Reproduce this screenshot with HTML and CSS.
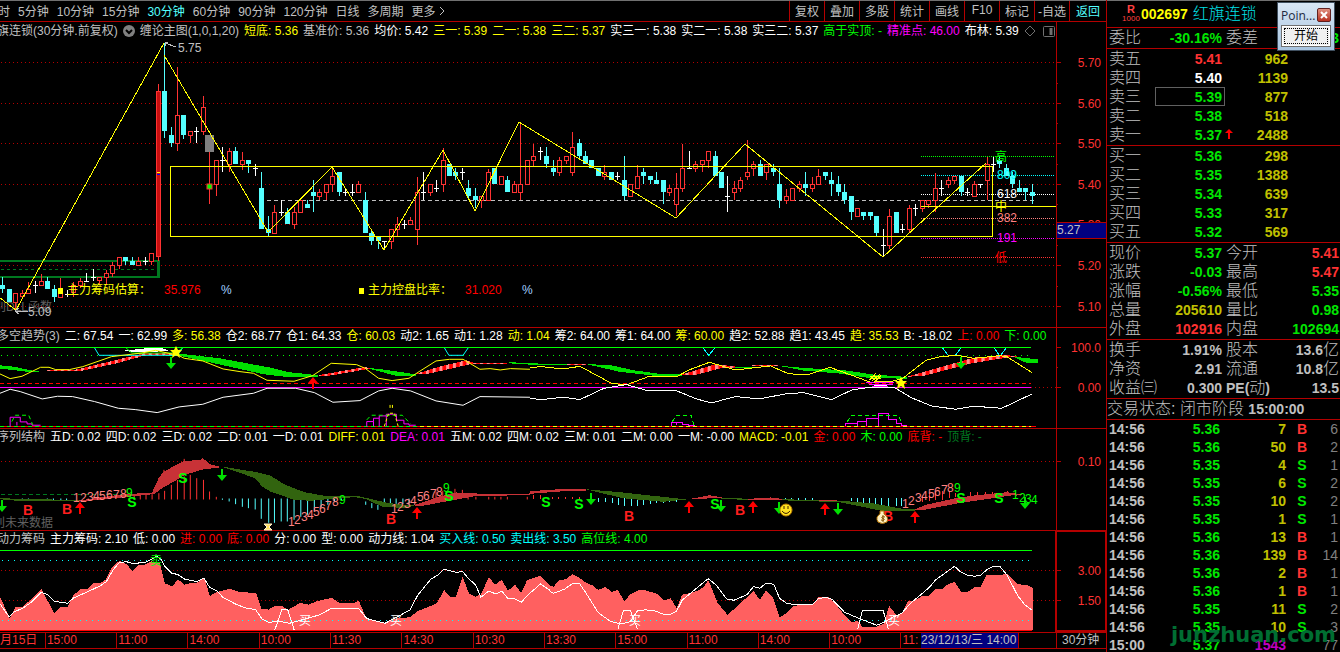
FILE: index.html
```html
<!DOCTYPE html>
<html lang="zh-CN">
<head>
    <meta charset="UTF-8">
    <meta name="viewport" content="width=device-width, initial-scale=1.0">
    <title>红旗连锁 002697</title>
    <link rel="stylesheet" href="styles.css">
</head>
<body>
    <div class="app">
        <main class="charts">
            <nav class="topbar">
                <div class="periods">
                    <button>时</button>
                    <button>5分钟</button>
                    <button>10分钟</button>
                    <button>15分钟</button>
                    <button class="active">30分钟</button>
                    <button>60分钟</button>
                    <button>90分钟</button>
                    <button>120分钟</button>
                    <button>日线</button>
                    <button>多周期</button>
                    <button>更多
                        <svg width="6" height="10" viewBox="0 0 6 10"><path d="M1 1l4 4-4 4" fill="none" stroke="#c0c0c0"/></svg>
                    </button>
                </div>
                <div class="tools">
                    <button>复权</button>
                    <button>叠加</button>
                    <button>多股</button>
                    <button>统计</button>
                    <button>画线</button>
                    <button>F10</button>
                    <button>标记</button>
                    <button>-自选</button>
                    <button class="back">返回</button>
                </div>
            </nav>

            <section class="panel">
                <header class="legend">
                    <span class="title">旗连锁(30分钟.前复权)</span>
                    <svg width="12" height="12" viewBox="0 0 12 12"><circle cx="6" cy="6" r="6" fill="#808080"/><path d="M3 5l3 3 3-3" fill="none" stroke="#000" stroke-width="2"/></svg>
                    <span class="gray">缠论主图(1,0,1,20)</span>
                    <span class="yellow">短底: 5.36</span>
                    <span class="gray">基准价: 5.36</span>
                    <span>均价: 5.42</span>
                    <span class="yellow">三一: 5.39</span>
                    <span class="yellow">二一: 5.38</span>
                    <span class="yellow">三二: 5.37</span>
                    <span>实三一: 5.38</span>
                    <span>实二一: 5.38</span>
                    <span>实三二: 5.37</span>
                    <span class="green">高于实顶: -</span>
                    <span class="magenta">精准点: 46.00</span>
                    <span>布林: 5.39</span>
                    <svg width="32" height="12" viewBox="0 0 32 12" fill="none" stroke="#707070"><path d="M6 1l5 5-5 5-5-5z"/><rect x="19.500" y="1.500" width="11" height="10" rx="1"/><path d="M27 3v7" stroke-width="3"/></svg>
                </header>
                <svg class="plot" viewBox="0 42 1106 285">
                    <g class="grid">
                        <path d="M1 62.500H1056M1 103.500H1056M1 143.500H1056M1 184.500H1056M1 224.500H1056M1 265.500H1056M1 306.500H1056"/>
                    </g>
                    <path class="axis" d="M1056.500 42V327M1056 62.500h5M1056 103.500h5M1056 143.500h5M1056 184.500h5M1056 224.500h5M1056 265.500h5M1056 306.500h5M1056 83.500h2M1056 123.500h2M1056 164.500h2M1056 204.500h2M1056 245.500h2M1056 286.500h2"/>
                    <g class="scale">
                        <text x="1101" y="67">5.70</text>
                        <text x="1101" y="108">5.60</text>
                        <text x="1101" y="148">5.50</text>
                        <text x="1101" y="189">5.40</text>
                        <text x="1101" y="229">5.30</text>
                        <text x="1101" y="270">5.20</text>
                        <text x="1101" y="311">5.10</text>
                    </g>

                    <!-- golden section levels -->
                    <g class="levels">
                        <path stroke="#00ff00" d="M921 156.500H1055"/>
                        <path stroke="#00ffff" d="M921 175.500H1055"/>
                        <path stroke="#ffffff" d="M921 194.500H1055"/>
                        <path stroke="#ff8080" d="M921 218.500H1055"/>
                        <path stroke="#ff00ff" d="M921 238.500H1055"/>
                        <path stroke="#ff3232" d="M921 257.500H1055"/>
                    </g>
                    <path d="M0 261H158.500V277H0" fill="none" stroke="#007820" stroke-width="2"/>
                    <path d="M158.500 261V278" stroke="#007820" stroke-width="3"/>
                    <path d="M1 269.500H154" stroke="#007820" stroke-dasharray="3 3"/>
                    <path d="M267 200.500H1036" stroke="#c0c0c0" stroke-dasharray="4 3"/>

                    <text x="-6" y="311" fill="#606060">别DLL函数</text>
                    <g id="candles" shape-rendering="crispEdges"></g>
                    <rect x="205" y="135" width="9" height="17" fill="#808080"/>
                    <rect x="207" y="184" width="5" height="5" fill="#00ff00" stroke="#ff3232"/>
                    <path d="M157 172.500h3" stroke="#ffff00"/>
                    <path d="M157 174.500h3" stroke="#0000ff"/>

                    <g class="line yellow-line">
                        <path d="M0 298L16 310L164 43M164 55L268 232L332 167L384 250L443 150L475 211L519 122L676 218L745 144L883 257L986 163"/>
                        <rect x="170.500" y="166.500" width="822" height="70"/>
                        <path d="M921 206.500H1056"/>
                    </g>
                    <path d="M176 47l-11-4M165 46v-4h3M28 311.500H16M19 308l-4 3 4 3" fill="none" stroke="#c0c0c0"/>
                    <text x="178" y="52" fill="#c0c0c0">5.75</text>
                    <text x="28" y="316" fill="#c0c0c0">5.09</text>

                    <text x="995" y="161" fill="#00ff00">高</text>
                    <text x="997" y="179" fill="#00ffff">809</text>
                    <text x="997" y="198" fill="#ffffff">618</text>
                    <text x="995" y="211" fill="#ffff00">中</text>
                    <text x="997" y="222" fill="#ff8080">382</text>
                    <text x="997" y="242" fill="#ff00ff">191</text>
                    <text x="995" y="262" fill="#ff0000">低</text>

                    <rect x="58" y="288" width="5" height="6" fill="#ffff00"/>
                    <text x="67" y="294" fill="#ffff00">主力筹码估算：</text>
                    <text x="164" y="294" fill="#ff0000">35.976</text>
                    <text x="221" y="294" fill="#a0d0ff">%</text>
                    <rect x="359" y="288" width="5" height="6" fill="#ffff00"/>
                    <text x="368" y="294" fill="#ffff00">主力控盘比率：</text>
                    <text x="465" y="294" fill="#ff0000">31.020</text>
                    <text x="522" y="294" fill="#a0d0ff">%</text>

                    <rect x="1056.500" y="222.500" width="50" height="16" fill="#000080" stroke="#b40000"/>
                    <text x="1057" y="234" fill="#c0c0c0">5.27</text>
                </svg>
            </section>

            <section class="panel">
                <header class="legend">
                    <span class="title">多空趋势(3)</span>
                    <span>二: 67.54</span>
                    <span>一: 62.99</span>
                    <span class="yellow">多: 56.38</span>
                    <span>仓2: 68.77</span>
                    <span>仓1: 64.33</span>
                    <span class="yellow">仓: 60.03</span>
                    <span>动2: 1.65</span>
                    <span>动1: 1.28</span>
                    <span class="yellow">动: 1.04</span>
                    <span>筹2: 64.00</span>
                    <span>筹1: 64.00</span>
                    <span class="yellow">筹: 60.00</span>
                    <span>趋2: 52.88</span>
                    <span>趋1: 43.45</span>
                    <span class="yellow">趋: 35.53</span>
                    <span>B: -18.02</span>
                    <span class="red">上: 0.00</span>
                    <span class="green">下: 0.00</span>
                </header>
                <svg class="plot" viewBox="0 347 1106 81">
                    <defs>
                        <pattern id="stripes" width="20" height="10" patternUnits="userSpaceOnUse">
                            <rect width="20" height="10" fill="#ff0000"/>
                            <rect width="9" height="10" fill="#ff9090"/>
                        </pattern>
                        <path id="down" d="M-1-6h2v6h4l-5 6-5-6h4z" fill="#00e000"/>
                        <path id="up" d="M-1 6h2v-6h4l-5-6-5 6h4z" fill="#ff0000"/>
                        <path id="star" d="M0-6l2 4 4 0-3 3 1 5-4-3-4 3 1-5-3-3 4 0z" fill="#ffff00"/>
                    </defs>
                    <path d="M0 347.500H1031" stroke="#00ff00"/>
                    <path d="M1 355.500H1031" stroke="#00ff00" stroke-dasharray="1 5"/>
                    <path d="M0 383.500H1031" stroke="#ff0000" stroke-dasharray="4 3"/>
                    <path d="M0 387.500H1031" stroke="#ff00ff"/>
                    <path class="grid" d="M1031 387.500H1056"/>
                    <path d="M0 426.500H1036" stroke="#ff0000"/>
                    <path d="M0 426.500H420" stroke="#00ff00" stroke-dasharray="4 3"/>
                    <path d="M420 426.500H1031" stroke="#ffff00" stroke-dasharray="4 3"/>
                    <path class="axis" d="M1056.500 347V428M1056 347.500h5M1056 387.500h5M1056 367.500h2"/>
                    <g class="scale">
                        <text x="1101" y="352">100.0</text>
                        <text x="1101" y="392">0.00</text>
                    </g>

                    <g class="line" transform="translate(0 325) scale(.338 .333)">
                        <g class="fill" fill="#00e000">
                            <path d="M0 121L40 125L95 137H140L95 142L0 131Z"/>
                            <path d="M400 84L540 87L650 100L800 128L850 141L940 151V156L850 156L780 148L620 112L540 94L400 87Z"/>
                            <path d="M1080 128L1130 133L1230 148V153L1170 152Z"/>
                            <path d="M1505 112L1568 114V119L1505 115Z"/>
                        </g>
                        <g class="fill" fill="url(#stripes)">
                            <path d="M140 134H225L430 84H520V91H430L350 114L240 138H140Z"/>
                            <path d="M940 151L1080 126L1095 131L1000 148L960 154Z"/>
                            <path d="M1230 147L1300 125L1380 106L1400 113H1500V116H1400L1260 148Z"/>
                        </g>
                        <path class="fill" fill="#ffffff" d="M358 78L440 69H480L500 78L420 82Z"/>
                        <path stroke="#00ffff" d="M280 69L293 91H525L540 69M1315 69L1328 91H1370L1385 69"/>
                        <path stroke="#00ff00" d="M373 69L390 84H520L540 69"/>
                        <path stroke="#ffff00" d="M0 147L30 161L65 154L120 127H145L165 134H205L245 125L330 95L420 84L460 76L530 92L545 100L600 108L660 132L710 140L750 145L790 166L870 169L925 152L980 115L1055 119L1080 130L1120 160L1160 167L1210 160L1240 140L1290 108L1330 103H1370L1420 133L1450 131L1480 135L1510 131L1568 133"/>
                        <path stroke="#ffffff" d="M0 205L30 193L60 200L125 222L170 214L215 215L280 230L350 250L400 254L465 263L530 246L600 238L660 217L750 205L790 190H875L930 203L985 232L1065 227L1120 198L1160 190L1215 198L1290 228L1370 241L1420 215L1568 217"/>
                        <path stroke="#ff00ff" d="M30 305V277H60V291H80V297H95V301H120M50 291V302M1085 305V290H1105V280H1122V273H1143V268H1173V286H1195V297H1210V301H1230M1105 290V304M1122 280V304M1143 273V304"/>
                        <path stroke="#00ff00" stroke-dasharray="4 3" d="M35 290L45 271H85L97 300M1085 285L1098 271H1190L1215 297"/>
                        <path stroke="#ffff00" stroke-dasharray="3 2" d="M1137 304L1150 265H1167L1178 304M1154 240V255M1161 240V255"/>
                    </g>
                    <g class="line" transform="translate(530 325) scale(.37 .333)">
                        <g class="fill" fill="#00e000">
                            <path d="M0 115L100 118V121L0 119Z"/>
                            <path d="M150 117L220 121L280 136L360 148H410V153H340L240 140Z"/>
                            <path d="M555 126H600V129H555ZM670 122L740 129L850 136L930 149L1020 156V161L920 160L840 146L740 137Z"/>
                            <path d="M1305 95L1372 103V113H1340Z"/>
                        </g>
                        <g class="fill" fill="url(#stripes)">
                            <path d="M100 117H150V120H100Z"/>
                            <path d="M410 149L500 118L555 124V128L520 129L450 149Z"/>
                            <path d="M600 120H670V123H600Z"/>
                            <path d="M1020 155L1200 98L1280 90L1320 94L1260 103L1190 116L1060 154Z"/>
                        </g>
                        <path stroke="#00ffff" d="M468 69L483 92L499 69M1115 69L1130 91H1150L1165 69M1255 69L1270 94L1287 69"/>
                        <path stroke="#ffff00" d="M0 128L30 125L90 132L135 124L170 145L220 175L260 180L320 155L395 156L430 135L485 112L555 135L650 123L700 147L755 148L810 127L860 147L920 172L985 168L1010 158L1070 106L1110 95L1155 91L1200 100L1270 92L1290 96L1357 143"/>
                        <path stroke="#ffffff" d="M0 220L30 224L90 217L135 224L200 190L260 179L320 198L395 197L450 222L490 234L555 215L620 222L690 207L740 203L815 224L870 195L920 187L985 188L1030 218L1085 243L1150 253L1200 244L1275 250L1357 207"/>
                        <path stroke="#ff00ff" d="M382 303V292H412V298H428V301H445M397 292V300M853 303V295H885V290H910V282H942V265H970V285H990V295H1005V301H1020M885 295V304M910 290V304M942 282V304"/>
                        <path stroke="#00ff00" stroke-dasharray="4 3" d="M385 290L395 271H435L443 300M857 290L870 271H995L1003 290"/>
                        <path stroke="#ff00ff" d="M908 173H985M915 178H980M925 184H968"/>
                        <path stroke="#ffffff" d="M930 181H965"/>
                        <path stroke="#ffff00" d="M918 165L935 145M925 168L945 148M930 172L948 152M920 155H945M918 162H948"/>
                    </g>
                    <use href="#star" x="176" y="352"/>
                    <use href="#star" x="901" y="383"/>
                    <use href="#down" x="171" y="363"/>
                    <use href="#down" x="961" y="363"/>
                    <use href="#up" x="313" y="383"/>
                </svg>
            </section>

            <section class="panel">
                <header class="legend">
                    <span class="title">序列结构</span>
                    <span>五D: 0.02</span>
                    <span>四D: 0.02</span>
                    <span>三D: 0.02</span>
                    <span>二D: 0.01</span>
                    <span>一D: 0.01</span>
                    <span class="yellow">DIFF: 0.01</span>
                    <span class="magenta">DEA: 0.01</span>
                    <span>五M: 0.02</span>
                    <span>四M: 0.02</span>
                    <span>三M: 0.01</span>
                    <span>二M: 0.00</span>
                    <span>一M: -0.00</span>
                    <span class="yellow">MACD: -0.01</span>
                    <span class="red">金: 0.00</span>
                    <span class="green">木: 0.00</span>
                    <span class="red">底背: -</span>
                    <span class="darkgreen">顶背: -</span>
                </header>
                <svg class="plot" viewBox="0 448 1106 82">
                    <path class="grid" d="M1 461.500H1056"/>
                    <path class="axis" d="M1056.500 448V530M1056 461.500h5"/>
                    <g class="scale"><text x="1101" y="466">0.10</text></g>
                    <path d="M1 494.500H128" stroke="#007820" stroke-dasharray="4 3"/>
                    <text x="-7" y="527" fill="#606060">别未来数据</text>

                    <g class="line" transform="translate(0 325) scale(.338 .333)">
                        <path stroke="#ff3232" d="M397 524V513M415 524V512M432 524V510M450 524V508M470 524V505M487 524V498M507 524V480M525 524V465M545 524V455M563 524V450M582 524V460M602 524V465M620 524V500M640 524V516M485 450V435M545 410V402M1290 526V500M1310 526V498M1346 510V492M1368 510V495M1385 524V515M1408 524V516M1446 524V516M1464 524V516M1482 524V516M1501 524V516M1560 524V516"/>
                        <path stroke="#54ffff" d="M66 527V521M84 527V521M140 526V521M158 526V521M180 526V521M197 527V521M658 521V525M678 521V530M697 521V538M717 521V546M735 521V550M755 521V554M773 521V582M795 521V594M812 521V594M832 521V590M850 521V590M870 521V585M890 521V576M910 521V570M930 521V560M950 521V548M970 521V540M990 521V532M1010 521V527M1082 530V540M1100 535V550M1118 540V555M1137 535V521M1155 537V521M1172 537V521M1192 538V521M1210 538V521"/>
                        <g class="fill" fill="#32640f">
                            <path d="M0 519L60 523L240 525V530L60 529L0 523Z"/>
                            <path d="M655 425L760 442L800 452L840 478L900 502L960 513L1065 515L1150 535L1225 542L1200 550L1130 545L1080 522L1050 517L960 524L920 528L870 525L800 500L775 485L755 460Z"/>
                        </g>
                        <g class="fill" fill="#c83237">
                            <path d="M235 527L350 510L450 503L470 458L485 440L540 410L595 404L600 400L622 418L655 427L600 434L550 449L480 490L455 508L350 519L240 530Z"/>
                            <path d="M1225 541L1300 515L1350 503L1450 508L1568 506V510L1400 515L1330 528L1240 545Z"/>
                        </g>
                    </g>
                    <g class="line" transform="translate(530 325) scale(.37 .333)">
                        <path stroke="#ff3232" d="M10 524V512M28 524V512M60 524V516M78 524V516M97 524V516M115 524V516M133 524V516M1060 533V515M1080 528V505M1097 525V500M1115 525V498M1133 520V500M1150 518V505M1190 515V500M1210 512V500M1230 516V502M1250 515V502M1290 505V498M1315 515V508"/>
                        <path stroke="#54ffff" d="M185 521V531M203 521V533M222 521V536M238 521V540M256 521V545M274 521V545M290 521V543M308 521V541M325 521V538M343 521V536M360 521V536M378 521V533M395 521V531M690 527V521M708 529V521M725 529V521M745 529V521M763 529V521M870 530V521M885 532V521M900 535V521M918 540V521M935 544V521M950 546V521M970 544V521M990 544V521M1005 543V521"/>
                        <g class="fill" fill="#32640f">
                            <path d="M150 493L250 503L400 521L430 523L360 531L250 520Z"/>
                            <path d="M515 518L590 522V526L515 521ZM670 521L740 526L830 527L930 536L1000 551L1040 552V558L960 560L840 533L780 530L670 526Z"/>
                        </g>
                        <g class="fill" fill="#c83237">
                            <path d="M0 499L80 493L150 493V498L80 500L0 507Z"/>
                            <path d="M430 523L485 511L520 518V521H480ZM590 522L650 518L680 522V525H590ZM780 526H830V529H780Z"/>
                            <path d="M1040 554L1070 540L1150 520L1200 512L1290 502L1340 511L1300 512L1160 535L1060 556Z"/>
                        </g>
                    </g>

                    <use href="#down" x="2" y="506"/>
                    <use href="#down" x="222" y="475"/>
                    <use href="#down" x="591" y="499"/>
                    <use href="#down" x="721" y="506"/>
                    <use href="#down" x="779" y="508"/>
                    <use href="#down" x="838" y="509"/>
                    <use href="#down" x="1025" y="503"/>
                    <use href="#up" x="80" y="508"/>
                    <use href="#up" x="417" y="513"/>
                    <use href="#up" x="689" y="507"/>
                    <use href="#up" x="753" y="507"/>
                    <use href="#up" x="825" y="509"/>
                    <use href="#up" x="915" y="517"/>

                    <g fill="#ff8080">
                        <text x="73 80 87 93 99 106 113 120" y="502 502 501 500 500 499 499 498">12345678</text>
                        <text x="288 294 301 307 313 319 325 332" y="526 524 521 519 516 513 510 506">12345678</text>
                        <text x="391 397 404 410 417 423 430 436" y="513 511 508 505 501 500 498 496">12345678</text>
                        <text x="902 908 915 921 928 934 941 947" y="508 505 502 500 498 496 494 492">12345678</text>
                    </g>
                    <g fill="#00ff00">
                        <text x="126" y="497">9</text>
                        <text x="339" y="504">9</text>
                        <text x="443" y="492">9</text>
                        <text x="954" y="492">9</text>
                        <text x="1012 1019 1025 1031" y="499 502 503 504">1234</text>
                    </g>
                    <g class="signal" fill="#ff1e1e">
                        <text x="28" y="515">B</text>
                        <text x="67" y="514">B</text>
                        <text x="391" y="524">B</text>
                        <text x="629" y="521">B</text>
                        <text x="740" y="515">B</text>
                        <text x="888" y="521">B</text>
                    </g>
                    <g class="signal" fill="#00ff00">
                        <text x="132" y="507">S</text>
                        <text x="183" y="483">S</text>
                        <text x="449" y="501">S</text>
                        <text x="546" y="507">S</text>
                        <text x="579" y="509">S</text>
                        <text x="715" y="509">S</text>
                        <text x="961" y="503">S</text>
                        <text x="999" y="503">S</text>
                    </g>
                    <g>
                        <circle cx="786" cy="510" r="6" fill="#ffe020" stroke="#c08000"/>
                        <path d="M784 506v3M788 506v3M782 511q4 5 8 0" fill="none" stroke="#402000"/>
                        <path d="M880 511l4 0 0 3q5 3 3 8-5 3-9 0-3-5 2-8z" fill="#fff0c0" stroke="#b07000"/>
                        <path d="M885 517q-4-1-3 1l2 1q1 2-3 1M883 515v7" fill="none" stroke="#805000"/>
                        <path d="M264 524h8l-3 3 3 3h-8l3-3z" fill="#ffe060" stroke="#fff0d0"/>
                    </g>
                </svg>
            </section>

            <section class="panel">
                <header class="legend">
                    <span class="title">动力筹码</span>
                    <span>主力筹码: 2.10</span>
                    <span>低: 0.00</span>
                    <span class="red">进: 0.00</span>
                    <span class="red">底: 0.00</span>
                    <span>分: 0.00</span>
                    <span>型: 0.00</span>
                    <span>动力线: 1.04</span>
                    <span class="cyan">买入线: 0.50</span>
                    <span class="cyan">卖出线: 3.50</span>
                    <span class="green">高位线: 4.00</span>
                </header>
                <svg class="plot" viewBox="0 550 1106 82">
                    <path d="M0 550.500H1032" stroke="#00ff00"/>
                    <path class="grid" d="M1 570.500H1056M1 600.500H1056"/>
                    <g transform="translate(0 530) scale(.351 .333)" fill="#ff6060" shape-rendering="crispEdges">
                        <path d="M0 200L28 265L45 231H65L118 178L155 250L172 231H192L210 195L230 178L250 176L268 159L288 158L300 150L318 112L340 93L360 102L378 124L395 105L412 104L432 94L455 100L470 160L490 170L507 148L525 164L540 160L562 158L581 142L598 198L618 186L655 177L680 185L730 190L745 236L765 239L782 228L805 229L820 240L855 219L880 224L905 213L945 204L965 218H1010L1023 213L1043 265L1095 278L1130 266L1168 262L1190 244L1245 220L1265 180L1282 200L1298 202L1318 141L1336 190L1355 200L1370 194L1393 141L1410 165L1430 149L1447 183L1467 164L1485 189L1502 150L1540 137L1568 168V301H0Z"/>
                    </g>
                    <g transform="translate(550 530) scale(.357 .333)" fill="#ff6060" shape-rendering="crispEdges">
                        <path d="M0 168L10 170L25 152L45 147L62 133L80 141L98 157L120 167L135 180L155 171L173 186L190 180L208 213L225 194L245 182L265 180L300 192L320 211L338 205L355 235L370 194L390 190L415 182L430 172L443 150L455 180L470 220L497 254L520 234L570 183L588 210L605 182L625 203L643 262L663 250L680 230L700 224H735L752 202H780L800 222L830 262L845 278L860 272L875 290H915L935 282L950 228L970 255L985 250L1003 213L1020 212L1045 197H1062L1080 178L1098 177L1115 163L1133 156L1152 185L1170 186L1190 171L1207 170L1223 136L1268 134L1280 132L1310 163L1335 165L1352 174V301H0Z"/>
                    </g>
                    <path d="M2 560.500H1032M2 620.500H1032" stroke="#00ffff" stroke-dasharray="1 5"/>
                    <g class="line" stroke="#ffffff" transform="translate(0 530) scale(.351 .333)">
                        <path d="M0 222L26 261L40 246L65 235L90 216L118 187L135 194L155 214L192 220L210 204L240 190L285 168L303 155L322 120L340 98L360 95L378 101L413 97L432 88L447 78L460 90L470 110L488 129L507 134L525 147L560 155L581 145L598 173L618 183L635 202L672 223L700 234L728 239L747 268L768 278L790 273L825 280L860 270L910 255L945 235L1022 236L1045 266L1097 280L1130 262L1168 240L1190 196L1228 147L1248 135L1265 118L1300 127L1318 125L1336 147L1355 165L1370 202L1393 183L1412 192L1430 184L1447 206H1465L1485 217L1505 194L1540 162L1568 182M783 300L803 240H820L838 300"/>
                    </g>
                    <g class="line" stroke="#ffffff" transform="translate(550 530) scale(.357 .333)">
                        <path d="M0 184L10 190L40 178L65 160H82L100 188L135 248L170 275L200 282L225 275L245 243L265 240L290 241L320 254L338 253L355 243L370 211L443 146L465 165L495 207L515 211L552 194L570 170L588 175L605 160L627 163L643 205L663 220L690 225L735 224L752 206L772 202L790 208L825 247L860 263L915 286L940 275L960 262L985 250L1010 220L1062 173L1080 150L1133 109L1150 126L1170 136L1190 139L1207 135L1223 120L1242 109H1260L1280 135L1310 197L1330 225L1350 240M190 298L206 241H225L245 298M862 298L875 241H933L948 298"/>
                    </g>
                    <path d="M0 630.500H1032" stroke="#ff0000"/>
                    <rect x="1056" y="531" width="50" height="100" fill="none" stroke="#b40000" stroke-width="2"/>
                    <path class="axis" d="M1056 570.500h5M1056 600.500h5"/>
                    <g class="scale">
                        <text x="1101" y="575">3.00</text>
                        <text x="1101" y="605">1.50</text>
                    </g>
                    <text x="150" y="565" fill="#00ff00">卖</text>
                    <g fill="#ffffff">
                        <text x="299" y="625">买</text>
                        <text x="390" y="625">买</text>
                        <text x="629" y="625">买</text>
                        <text x="888" y="625">买</text>
                    </g>
                </svg>
            </section>

            <footer class="timeline">
                <span class="first">月15日</span>
                <span>15:00</span>
                <span>11:00</span>
                <span>14:00</span>
                <span>10:00</span>
                <span>11:30</span>
                <span>14:30</span>
                <span>10:30</span>
                <span>13:30</span>
                <span>15:00</span>
                <span>11:00</span>
                <span>14:00</span>
                <span>10:00</span>
                <span class="short">11:</span>
                <time class="cursor">23/12/13/三 14:00</time>
                <span class="unit">30分钟</span>
            </footer>
        </main>

        <aside class="quote">
            <h1><span class="mark"><b>R</b><i>1000</i></span><b class="code">002697</b><span class="stock">红旗连锁</span></h1>

            <table class="pairs">
                <tr><th>委比</th><td class="green">-30.16%</td><th>委差</th><td class="green">-2773</td></tr>
            </table>

            <table class="book">
                <tr><th>卖五</th><td class="up">5.41</td><td class="vol">962</td><td></td></tr>
                <tr><th>卖四</th><td class="white">5.40</td><td class="vol">1139</td><td></td></tr>
                <tr><th>卖三</th><td class="green picked">5.39</td><td class="vol">877</td><td></td></tr>
                <tr><th>卖二</th><td class="green">5.38</td><td class="vol">518</td><td></td></tr>
                <tr><th>卖一</th><td class="green">5.37</td><td class="vol last-trade"><svg width="8" height="10" viewBox="0 0 8 10"><path d="M4 0l4 4H5v6H3V4H0z" fill="#ff0000"/></svg>2488</td><td></td></tr>
            </table>

            <table class="book">
                <tr><th>买一</th><td class="green">5.36</td><td class="vol">298</td><td></td></tr>
                <tr><th>买二</th><td class="green">5.35</td><td class="vol">1388</td><td></td></tr>
                <tr><th>买三</th><td class="green">5.34</td><td class="vol">639</td><td></td></tr>
                <tr><th>买四</th><td class="green">5.33</td><td class="vol">317</td><td></td></tr>
                <tr><th>买五</th><td class="green">5.32</td><td class="vol">569</td><td></td></tr>
            </table>

            <table class="pairs">
                <tr><th>现价</th><td class="green">5.37</td><th>今开</th><td class="up">5.41</td></tr>
                <tr><th>涨跌</th><td class="green">-0.03</td><th>最高</th><td class="up">5.47</td></tr>
                <tr><th>涨幅</th><td class="green">-0.56%</td><th>最低</th><td class="green">5.35</td></tr>
                <tr><th>总量</th><td class="vol">205610</td><th>量比</th><td class="green">0.98</td></tr>
                <tr><th>外盘</th><td class="up">102916</td><th>内盘</th><td class="green">102694</td></tr>
            </table>

            <table class="pairs">
                <tr><th>换手</th><td>1.91%</td><th>股本</th><td>13.6<span class="cjk">亿</span></td></tr>
                <tr><th>净资</th><td>2.91</td><th>流通</th><td>10.8<span class="cjk">亿</span></td></tr>
                <tr><th>收益㈢</th><td>0.300</td><th><b>PE(</b>动<b>)</b></th><td>13.5</td></tr>
            </table>

            <p class="status">交易状态: 闭市阶段 <b>15:00:00</b></p>

            <table class="ticks">
                <tr><td>14:56</td><td>5.36</td><td>7</td><td class="up">B</td><td>6</td></tr>
                <tr><td>14:56</td><td>5.36</td><td>50</td><td class="up">B</td><td>2</td></tr>
                <tr><td>14:56</td><td>5.35</td><td>4</td><td class="green">S</td><td>1</td></tr>
                <tr><td>14:56</td><td>5.35</td><td>6</td><td class="green">S</td><td>2</td></tr>
                <tr><td>14:56</td><td>5.35</td><td>10</td><td class="green">S</td><td>2</td></tr>
                <tr><td>14:56</td><td>5.35</td><td>1</td><td class="green">S</td><td>1</td></tr>
                <tr><td>14:56</td><td>5.36</td><td>13</td><td class="up">B</td><td>1</td></tr>
                <tr><td>14:56</td><td>5.36</td><td>139</td><td class="up">B</td><td>14</td></tr>
                <tr><td>14:56</td><td>5.36</td><td>2</td><td class="up">B</td><td>1</td></tr>
                <tr><td>14:56</td><td>5.36</td><td>1</td><td class="up">B</td><td>1</td></tr>
                <tr><td>14:56</td><td>5.35</td><td>11</td><td class="green">S</td><td>2</td></tr>
                <tr><td>14:56</td><td>5.35</td><td>10</td><td class="green">S</td><td>3</td></tr>
                <tr><td>15:00</td><td>5.37</td><td class="purple">1543</td><td></td><td>77</td></tr>
            </table>
            <div class="watermark">junzhuan.com</div>
        </aside>
    </div>

    <div class="dialog">
        <div class="dialog-title">
            <span>Poin...</span>
            <button class="close" aria-label="关闭"><svg width="8" height="8" viewBox="0 0 8 8"><path d="M1 1l6 6M7 1l-6 6" stroke="#fff" stroke-width="2"/></svg></button>
        </div>
        <button class="start">开始</button>
    </div>

    <script src="charts.js"></script>
</body>
</html>
```
FILE: styles.css
```css
* {
    box-sizing: border-box;
}

body {
    margin: 0;
    background: #000;
    color: #c0c0c0;
    font-family: "Liberation Sans", "Noto Sans CJK SC", sans-serif;
    font-size: 12px;
    overflow: hidden;
}

button {
    background: none;
    border: 0;
    padding: 0;
    color: inherit;
    font: inherit;
    cursor: pointer;
    white-space: nowrap;
}

.app {
    display: flex;
    height: 100vh;
    overflow: hidden;
    box-shadow: inset 0 1px #707070;
}

.charts {
    flex: 1;
    min-width: 0;
}

/* toolbar */
.topbar {
    display: flex;
    justify-content: space-between;
    height: 22px;
    border-top: 1px solid #707070;
    border-bottom: 1px solid #b40000;
}

.topbar button {
    padding-bottom: 2px;
}

.periods {
    display: flex;
    gap: 8px;
    margin-left: -2px;
}

.periods .active,
.tools .back {
    color: #54ffff;
}

.tools {
    display: flex;
}

.tools button {
    width: 35px;
    border-left: 1px solid #b40000;
}

.tools .back {
    width: 37px;
}

/* chart panels */
.panel + .panel {
    border-top: 1px solid #b40000;
}

.legend {
    display: flex;
    align-items: center;
    gap: 5px;
    height: 19px;
    margin-right: 49px;
    padding-bottom: 3px;
    border-right: 1px solid #b40000;
    color: #fff;
    line-height: 16px;
    white-space: nowrap;
    overflow: hidden;
}

.panel:first-of-type .legend {
    height: 20px;
}

.legend svg {
    flex: none;
}

.legend .title {
    margin-left: -3px;
    color: #c0c0c0;
}

.gray { color: #c0c0c0; }
.white { color: #fff; }
.yellow { color: #ff0; }
.green { color: #00ff00; }
.darkgreen { color: #007820; }
.magenta { color: #f0f; }
.red { color: #f00; }
.cyan { color: #0ff; }

.plot {
    display: block;
    width: 100%;
    overflow: visible;
}

.plot > path {
    shape-rendering: crispEdges;
}

.grid {
    stroke: #b40000;
    stroke-dasharray: 1 3;
    shape-rendering: crispEdges;
}

.axis {
    stroke: #b40000;
    fill: none;
}

.scale text {
    fill: #ff3232;
    text-anchor: end;
}

.levels {
    stroke-dasharray: 1 1;
    shape-rendering: crispEdges;
}

.line {
    fill: none;
    shape-rendering: crispEdges;
}

.line path {
    vector-effect: non-scaling-stroke;
}

.yellow-line {
    stroke: #ff0;
}

.signal text {
    font-size: 14px;
    font-weight: bold;
    text-anchor: middle;
}

/* time axis */
.timeline {
    display: flex;
    height: 17px;
    border-top: 1px solid #b40000;
    border-bottom: 1px solid #b40000;
    color: #ff3232;
    line-height: 15px;
    white-space: nowrap;
}

.timeline span {
    flex: 71 1 0;
    padding-left: 1px;
    border-left: 1px solid #b40000;
    overflow: hidden;
}

.timeline .first {
    flex: 46 1 0;
    border-left: 0;
    padding-left: 0;
}

.timeline .short {
    flex: 19 1 0;
}

.timeline .cursor {
    flex: none;
    width: 98px;
    background: #000080;
    color: #c0c0c0;
    border-right: 1px solid #b40000;
    overflow: hidden;
}

.timeline .unit {
    flex: none;
    width: 50px;
    margin-left: 37px;
    padding-left: 5px;
    color: #c0c0c0;
}

/* quote sidebar */
.quote {
    position: relative;
    flex: none;
    width: 234px;
    border-left: 1px solid #b40000;
    font-size: 14px;
}

.quote h1 {
    display: flex;
    align-items: center;
    height: 27px;
    margin: 0;
    padding-left: 14px;
    font-size: 14px;
    font-weight: normal;
}

.mark {
    width: 20px;
    color: #ff4040;
    font-size: 8px;
    line-height: 10px;
    text-align: center;
}

.mark b,
.mark i {
    display: block;
    font-style: normal;
}

.mark b {
    font-size: 11px;
}

.code {
    color: #ff0;
}

.stock {
    margin-left: 5px;
    color: #00e0e8;
    font-size: 16px;
    font-weight: 300;
    line-height: 20px;
}

.quote table {
    width: 100%;
    table-layout: fixed;
    border-collapse: separate;
    border-spacing: 0;
    border-top: 1px solid #b40000;
    padding: 0 0 1px 2px;
}

.quote th,
.quote td {
    height: 19px;
    padding: 0;
    line-height: 18px;
    white-space: nowrap;
}

.quote th {
    width: 46px;
    font-size: 16px;
    font-weight: 300;
    text-align: left;
}

.quote th b {
    font-size: 14px;
    font-weight: 700;
}

.quote td {
    font-weight: bold;
    text-align: right;
}

.quote th + td {
    width: 70px;
    padding-right: 3px;
}

.quote td.green {
    color: #00e600;
}

.quote td.up {
    color: #ff3232;
}

.quote td.white {
    color: #fff;
}

.quote td.vol {
    color: #c0c000;
}

.book td.vol {
    width: 63px;
}

.book td.picked {
    box-shadow: inset 0 0 0 1px #606060;
}

.last-trade svg {
    float: left;
    margin-top: 3px;
}

.pairs td + th {
    padding-left: 1px;
}

.pairs th + td:last-child {
    width: auto;
    padding-right: 1px;
}

.cjk {
    font-size: 16px;
    font-weight: 300;
}

.status {
    height: 21px;
    margin: 0;
    border-top: 1px solid #b40000;
    font-size: 16px;
    font-weight: 300;
    line-height: 19px;
    white-space: nowrap;
}

.status b {
    font-size: 14px;
    font-weight: 700;
}

.quote .ticks td {
    height: 18px;
}

.ticks td:nth-child(1) {
    width: 46px;
    text-align: left;
}

.ticks td:nth-child(2) {
    width: 65px;
    color: #00e600;
}

.ticks td:nth-child(3) {
    width: 66px;
    color: #c0c000;
}

.quote .ticks td:nth-child(4) {
    width: 32px;
    text-align: center;
}

.quote .ticks td:nth-child(5) {
    padding-right: 2px;
    color: #808080;
    font-weight: normal;
}

.ticks td.purple {
    color: #c000c0;
}

.watermark {
    position: absolute;
    right: 4px;
    top: 622px;
    color: #006e32;
    font-family: "DejaVu Sans", sans-serif;
    font-size: 21px;
    font-weight: bold;
    line-height: 26px;
}

/* floating window */
.dialog {
    position: absolute;
    top: 2px;
    right: 5px;
    width: 58px;
    padding: 2px 3px 3px;
    background: linear-gradient(#d8e6f4, #a8c4e0);
    border: 1px solid #405060;
    color: #202840;
}

.dialog-title {
    display: flex;
    align-items: center;
    justify-content: space-between;
    height: 20px;
    font-family: "Open Sans", sans-serif;
    font-size: 12px;
}

.close {
    width: 14px;
    height: 14px;
    background: linear-gradient(#e09080, #b83020);
    border: 1px solid #602020;
    border-radius: 2px;
    line-height: 8px;
}

.start {
    width: 100%;
    height: 22px;
    background: #f0f0f0;
    border: 1px solid #707070;
    box-shadow: inset 0 0 0 1px #fff;
    outline: 1px dotted #000;
    outline-offset: -4px;
    color: #000;
    line-height: 18px;
}
```
FILE: charts.js
```js
// kind, x, high, low, body top, body bottom
// r = rising (hollow), c = falling (solid), w = unchanged (cross), f = rising solid
const candles = [
    ['c', 2, 277, 293, 285, 289], ['c', 9, 289, 302, 289, 302], ['r', 15, 293, 310, 293, 303],
    ['r', 22, 290, 298, 293, 297], ['r', 28, 282, 294, 289, 294], ['w', 35, 281, 293, 285, 285],
    ['r', 41, 274, 286, 281, 286], ['c', 47, 277, 289, 281, 289], ['c', 54, 285, 302, 289, 297],
    ['r', 60, 278, 298, 293, 298], ['w', 67, 290, 297, 294, 294], ['r', 73, 282, 297, 285, 293],
    ['r', 80, 278, 288, 281, 286], ['w', 86, 273, 282, 281, 281], ['w', 93, 269, 281, 277, 277],
    ['r', 99, 277, 285, 277, 281], ['r', 106, 270, 285, 273, 278], ['r', 112, 262, 277, 265, 274],
    ['r', 119, 257, 269, 257, 266], ['c', 125, 257, 265, 257, 261], ['c', 132, 257, 265, 261, 265],
    ['r', 138, 257, 266, 261, 266], ['w', 145, 257, 265, 261, 261], ['r', 151, 253, 265, 253, 262],
    ['f', 158, 84, 261, 91, 257], ['c', 164, 43, 138, 91, 131], ['c', 171, 127, 147, 135, 143],
    ['r', 177, 67, 151, 115, 144], ['c', 183, 115, 139, 115, 135], ['r', 190, 131, 143, 131, 136],
    ['w', 196, 127, 143, 131, 131], ['r', 203, 96, 135, 107, 132], ['r', 209, 140, 204, 184, 189],
    ['r', 216, 160, 196, 160, 185], ['w', 222, 147, 172, 160, 160], ['r', 229, 148, 172, 151, 165],
    ['c', 235, 147, 164, 151, 164], ['r', 242, 152, 170, 160, 165], ['c', 248, 160, 173, 160, 164],
    ['w', 255, 164, 176, 168, 168], ['c', 261, 172, 229, 188, 229], ['c', 268, 216, 236, 229, 233],
    ['r', 274, 205, 234, 212, 234], ['w', 281, 200, 216, 212, 212], ['c', 287, 208, 224, 212, 224],
    ['r', 294, 207, 229, 212, 225], ['r', 300, 200, 213, 200, 213], ['c', 307, 200, 208, 204, 208],
    ['c', 313, 180, 212, 192, 196], ['r', 319, 189, 200, 192, 197], ['r', 326, 184, 200, 184, 193],
    ['r', 332, 167, 192, 176, 185], ['c', 339, 172, 196, 172, 192], ['w', 345, 188, 196, 192, 192],
    ['w', 352, 184, 196, 192, 192], ['r', 358, 181, 193, 184, 193], ['c', 365, 192, 233, 200, 233],
    ['c', 371, 229, 245, 233, 241], ['c', 378, 237, 249, 237, 241], ['w', 384, 241, 250, 241, 241],
    ['r', 391, 229, 249, 229, 242], ['r', 397, 217, 236, 224, 230], ['w', 404, 220, 229, 224, 224],
    ['r', 410, 217, 225, 220, 225], ['r', 417, 177, 245, 192, 230], ['w', 423, 172, 200, 192, 192],
    ['r', 430, 184, 196, 184, 193], ['w', 436, 180, 192, 188, 188], ['r', 443, 148, 192, 160, 185],
    ['c', 449, 164, 176, 164, 176], ['c', 455, 168, 180, 172, 176], ['w', 462, 168, 180, 172, 172],
    ['c', 468, 180, 200, 188, 196], ['c', 475, 188, 208, 196, 200], ['r', 481, 196, 208, 196, 201],
    ['r', 488, 169, 201, 172, 201], ['c', 494, 168, 184, 168, 184], ['r', 501, 176, 185, 176, 185],
    ['c', 507, 176, 192, 180, 192], ['r', 514, 181, 193, 184, 193], ['r', 520, 123, 200, 184, 193],
    ['r', 527, 160, 185, 160, 185], ['r', 533, 144, 167, 156, 161], ['w', 540, 147, 160, 151, 151],
    ['c', 546, 147, 168, 156, 164], ['c', 553, 160, 176, 168, 172], ['r', 559, 157, 176, 160, 173],
    ['r', 566, 156, 164, 156, 161], ['r', 572, 132, 176, 147, 173], ['c', 579, 139, 159, 143, 156],
    ['c', 585, 151, 164, 156, 164], ['c', 591, 160, 168, 160, 168], ['c', 598, 168, 176, 168, 176],
    ['r', 604, 165, 180, 172, 177], ['c', 611, 172, 180, 172, 180], ['w', 617, 172, 180, 176, 176],
    ['c', 624, 156, 200, 180, 196], ['r', 630, 184, 197, 184, 197], ['r', 637, 165, 189, 176, 189],
    ['c', 643, 168, 184, 172, 176], ['c', 650, 176, 184, 176, 180], ['c', 656, 172, 184, 180, 184],
    ['c', 663, 180, 204, 180, 192], ['r', 669, 185, 196, 188, 193], ['r', 676, 173, 216, 188, 205],
    ['r', 682, 144, 192, 168, 189], ['w', 689, 151, 169, 168, 168], ['r', 695, 161, 172, 164, 169],
    ['r', 702, 160, 172, 160, 165], ['r', 708, 151, 168, 151, 161], ['c', 715, 151, 176, 156, 176],
    ['c', 721, 172, 188, 172, 188], ['w', 727, 176, 212, 196, 196], ['r', 734, 181, 200, 188, 193],
    ['r', 740, 177, 192, 180, 189], ['r', 747, 140, 180, 172, 177], ['r', 753, 161, 176, 164, 169],
    ['c', 760, 160, 176, 164, 176], ['r', 766, 164, 180, 164, 173], ['c', 773, 164, 176, 168, 172],
    ['c', 779, 168, 208, 184, 200], ['r', 786, 189, 204, 196, 201], ['r', 792, 188, 201, 188, 201],
    ['r', 799, 181, 192, 184, 189], ['c', 805, 172, 196, 184, 188], ['r', 812, 177, 192, 184, 189],
    ['r', 818, 169, 185, 176, 185], ['c', 825, 172, 180, 172, 176], ['c', 831, 172, 196, 180, 184],
    ['c', 838, 176, 196, 184, 192], ['c', 844, 184, 204, 192, 200], ['c', 851, 196, 220, 196, 212],
    ['r', 857, 208, 217, 208, 217], ['c', 863, 212, 220, 212, 216], ['c', 870, 212, 220, 212, 216],
    ['c', 876, 216, 236, 216, 233], ['w', 883, 229, 256, 245, 245], ['r', 889, 209, 249, 216, 246],
    ['c', 896, 212, 233, 212, 233], ['w', 902, 224, 233, 229, 229], ['r', 909, 205, 233, 208, 230],
    ['w', 915, 204, 216, 208, 208], ['r', 922, 200, 212, 200, 209], ['r', 928, 200, 208, 200, 205],
    ['r', 935, 173, 212, 188, 201], ['w', 941, 180, 196, 188, 188], ['r', 948, 177, 188, 180, 185],
    ['r', 954, 176, 184, 176, 181], ['c', 961, 176, 196, 176, 192], ['w', 967, 188, 196, 192, 192],
    ['r', 974, 181, 197, 184, 197], ['w', 980, 184, 188, 184, 184], ['r', 987, 157, 200, 164, 181],
    ['w', 993, 157, 172, 164, 164], ['c', 999, 156, 168, 160, 164], ['c', 1006, 164, 176, 168, 176],
    ['c', 1012, 172, 188, 176, 184], ['c', 1019, 180, 192, 188, 192], ['c', 1025, 188, 200, 188, 192],
    ['c', 1032, 184, 204, 192, 196]
];

const colors = { r: '#ff3232', c: '#54ffff', w: '#ffffff', f: '#ff3232' };
const layer = document.getElementById('candles');

function add(name, attrs) {
    const el = document.createElementNS('http://www.w3.org/2000/svg', name);
    for (const key in attrs) {
        el.setAttribute(key, attrs[key]);
    }
    layer.appendChild(el);
}

candles.forEach(([kind, x, high, low, top, bottom]) => {
    const color = colors[kind];
    add('rect', { x: x, y: high, width: 1, height: low - high, fill: color });

    if (kind === 'w') {
        add('rect', { x: x - 2, y: top, width: 5, height: 1, fill: color });
    } else if (kind === 'c') {
        add('rect', { x: x - 2, y: top, width: 5, height: bottom - top, fill: color });
    } else {
        add('rect', {
            x: x - 1.5,
            y: top + 0.5,
            width: 4,
            height: bottom - top - 1,
            fill: kind === 'f' ? '#c80f0f' : '#000000',
            stroke: color
        });
    }
});
```
